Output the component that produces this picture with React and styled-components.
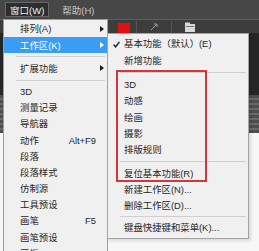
import styled, { createGlobalStyle } from "styled-components"

const GlobalStyle = createGlobalStyle`
  html, body {
    margin: 0;
    background: #f6f6f6;
  }
  body {
    font-family: "Liberation Sans", "Noto Sans CJK SC", sans-serif;
  }
`

const mainItems = [
  { label: "排列(A)", sub: true },
  { label: "工作区(K)", sub: true, active: true },
  { sep: 7 },
  { label: "扩展功能", sub: true },
  { sep: 7 },
  { label: "3D" },
  { label: "测量记录" },
  { label: "导航器" },
  { label: "动作", shortcut: "Alt+F9" },
  { label: "段落" },
  { label: "段落样式" },
  { label: "仿制源" },
  { label: "工具预设" },
  { label: "画笔", shortcut: "F5" },
  { label: "画笔预设" },
  { label: "画板" },
]

const subItems = [
  { label: "基本功能（默认）(E)", checked: true },
  { label: "新增功能" },
  { sep: 8 },
  { label: "3D" },
  { label: "动感" },
  { label: "绘画" },
  { label: "摄影" },
  { label: "排版规则" },
  { sep: 7 },
  { label: "复位基本功能(R)" },
  { label: "新建工作区(N)..." },
  { label: "删除工作区(D)..." },
  { sep: 6 },
  { label: "键盘快捷键和菜单(K)..." },
]

export default function App() {
  return (
    <Screen>
      <GlobalStyle />
      <MenuBar>
        <BarItem $open>窗口(W)</BarItem>
        <BarItem>帮助(H)</BarItem>
      </MenuBar>
      <Toolbar>
        <RedTool />
        <ToolDivider />
        <ToolIcon>
          <svg width="10" height="10" viewBox="0 0 10 10">
            <path d="M2 8 L8 2 M5 2 H8 V5" fill="none" stroke="#9a9a9a" strokeWidth="1" />
          </svg>
        </ToolIcon>
        <ToolDivider />
        <ToolIcon>
          <svg width="12" height="10" viewBox="0 0 12 10">
            <rect x="1" y="2" width="10" height="8" fill="#d8d8d8" />
            <rect x="1" y="0.5" width="5" height="2" fill="#d8d8d8" />
            <rect x="2" y="4" width="8" height="1" fill="#777" />
          </svg>
        </ToolIcon>
      </Toolbar>
      <Workspace>
        <DarkPanel />
        <GreyPanel />
        <LightPanel />
      </Workspace>

      <Dropdown>
        {mainItems.map((item, i) =>
          item.sep ? (
            <Separator key={i} $space={item.sep} />
          ) : (
            <MainItem key={i} $active={item.active}>
              <Label>{item.label}</Label>
              {item.shortcut && <Shortcut>{item.shortcut}</Shortcut>}
              <ArrowSlot>{item.sub && <Arrow $active={item.active} />}</ArrowSlot>
            </MainItem>
          )
        )}
      </Dropdown>

      <Submenu>
        {subItems.map((item, i) =>
          item.sep ? (
            <Separator key={i} $space={item.sep} />
          ) : (
            <SubItem key={i}>
              <CheckSlot>
                {item.checked && (
                  <svg width="7" height="7" viewBox="0 0 7 7">
                    <path d="M0.6 3.6 L2.6 5.8 L6.4 0.8" fill="none" stroke="#1a1a1a" strokeWidth="1.4" />
                  </svg>
                )}
              </CheckSlot>
              <Label>{item.label}</Label>
            </SubItem>
          )
        )}
        <Highlight />
      </Submenu>
    </Screen>
  )
}

const Screen = styled.div`
  position: relative;
  width: 259px;
  height: 251px;
  overflow: hidden;
  display: flex;
  flex-direction: column;
  background: #f6f6f6;
`

const MenuBar = styled.div`
  height: 19px;
  background: #474747;
  display: flex;
  align-items: center;
  padding-left: 5px;
  gap: 8px;
  box-sizing: border-box;
`

const BarItem = styled.div`
  height: 13px;
  display: flex;
  align-items: center;
  padding: 0 4px;
  font-size: 9.5px;
  color: ${(p) => (p.$open ? "#ececec" : "#c9c9c9")};
  background: ${(p) => (p.$open ? "#2d2d2d" : "transparent")};
  border: 1px solid ${(p) => (p.$open ? "#676767" : "transparent")};
`

const Toolbar = styled.div`
  height: 14px;
  background: #3d3d3d;
  border-top: 1px solid #5e5e5e;
  box-sizing: border-box;
  display: flex;
  align-items: center;
  padding-left: 118px;
  gap: 6px;
`

const RedTool = styled.div`
  width: 12px;
  height: 10px;
  margin-top: 3px;
  background: #e01010;
`

const ToolDivider = styled.div`
  width: 1px;
  height: 12px;
  background: #555;
`

const ToolIcon = styled.div`
  display: flex;
  align-items: center;
  padding: 0 6px;
`

const Workspace = styled.div`
  flex: 1;
  display: flex;
  flex-direction: column;
`

const DarkPanel = styled.div`
  height: 62px;
  background: #262626;
`

const GreyPanel = styled.div`
  height: 38px;
  background: repeating-linear-gradient(#4e4e4e 0 3px, #6a6a6a 3px 5px);
`

const LightPanel = styled.div`
  flex: 1;
  background: #f7f7f7;
`

const Dropdown = styled.div`
  position: absolute;
  top: 19px;
  left: 3px;
  width: 103px;
  height: 250px;
  background: #f0f0f0;
  border: 1px solid #9d9d9d;
  padding-top: 1px;
  box-sizing: content-box;
`

const Label = styled.span`
  flex: 1;
  white-space: nowrap;
`

const MainItem = styled.div`
  height: 16.2px;
  display: flex;
  align-items: center;
  padding-left: 16px;
  font-size: 9.4px;
  line-height: 1;
  color: ${(p) => (p.$active ? "#ffffff" : "#262626")};
  background: ${(p) => (p.$active ? "#3a9cf2" : "transparent")};
`

const Shortcut = styled.span`
  white-space: nowrap;
`

const ArrowSlot = styled.span`
  width: 11px;
  padding-left: 4px;
  box-sizing: border-box;
  display: flex;
  align-items: center;
`

const Arrow = styled.span`
  width: 0;
  height: 0;
  border-left: 4px solid ${(p) => (p.$active ? "#ffffff" : "#1a1a1a")};
  border-top: 3.5px solid transparent;
  border-bottom: 3.5px solid transparent;
`

const Separator = styled.div`
  height: ${(p) => p.$space}px;
  display: flex;
  align-items: center;
  padding: 0 2px 0 12px;

  &::after {
    content: "";
    flex: 1;
    height: 1px;
    background: #cfcfcf;
  }
`

const Submenu = styled.div`
  position: absolute;
  top: 33px;
  left: 107px;
  width: 140px;
  background: #f0f0f0;
  border: 1px solid #a3a3a3;
  padding: 2px 0 2px;
  box-shadow: 2px 2px 3px rgba(0, 0, 0, 0.12);
`

const SubItem = styled.div`
  height: 16.3px;
  display: flex;
  align-items: center;
  font-size: 9.4px;
  line-height: 1;
  color: #262626;
`

const CheckSlot = styled.span`
  width: 16px;
  padding-left: 5px;
  box-sizing: border-box;
  display: flex;
  align-items: center;
`

const Highlight = styled.div`
  position: absolute;
  top: 36px;
  left: 8px;
  width: 87px;
  height: 108px;
  border: 2px solid #d3363c;
  pointer-events: none;
`
